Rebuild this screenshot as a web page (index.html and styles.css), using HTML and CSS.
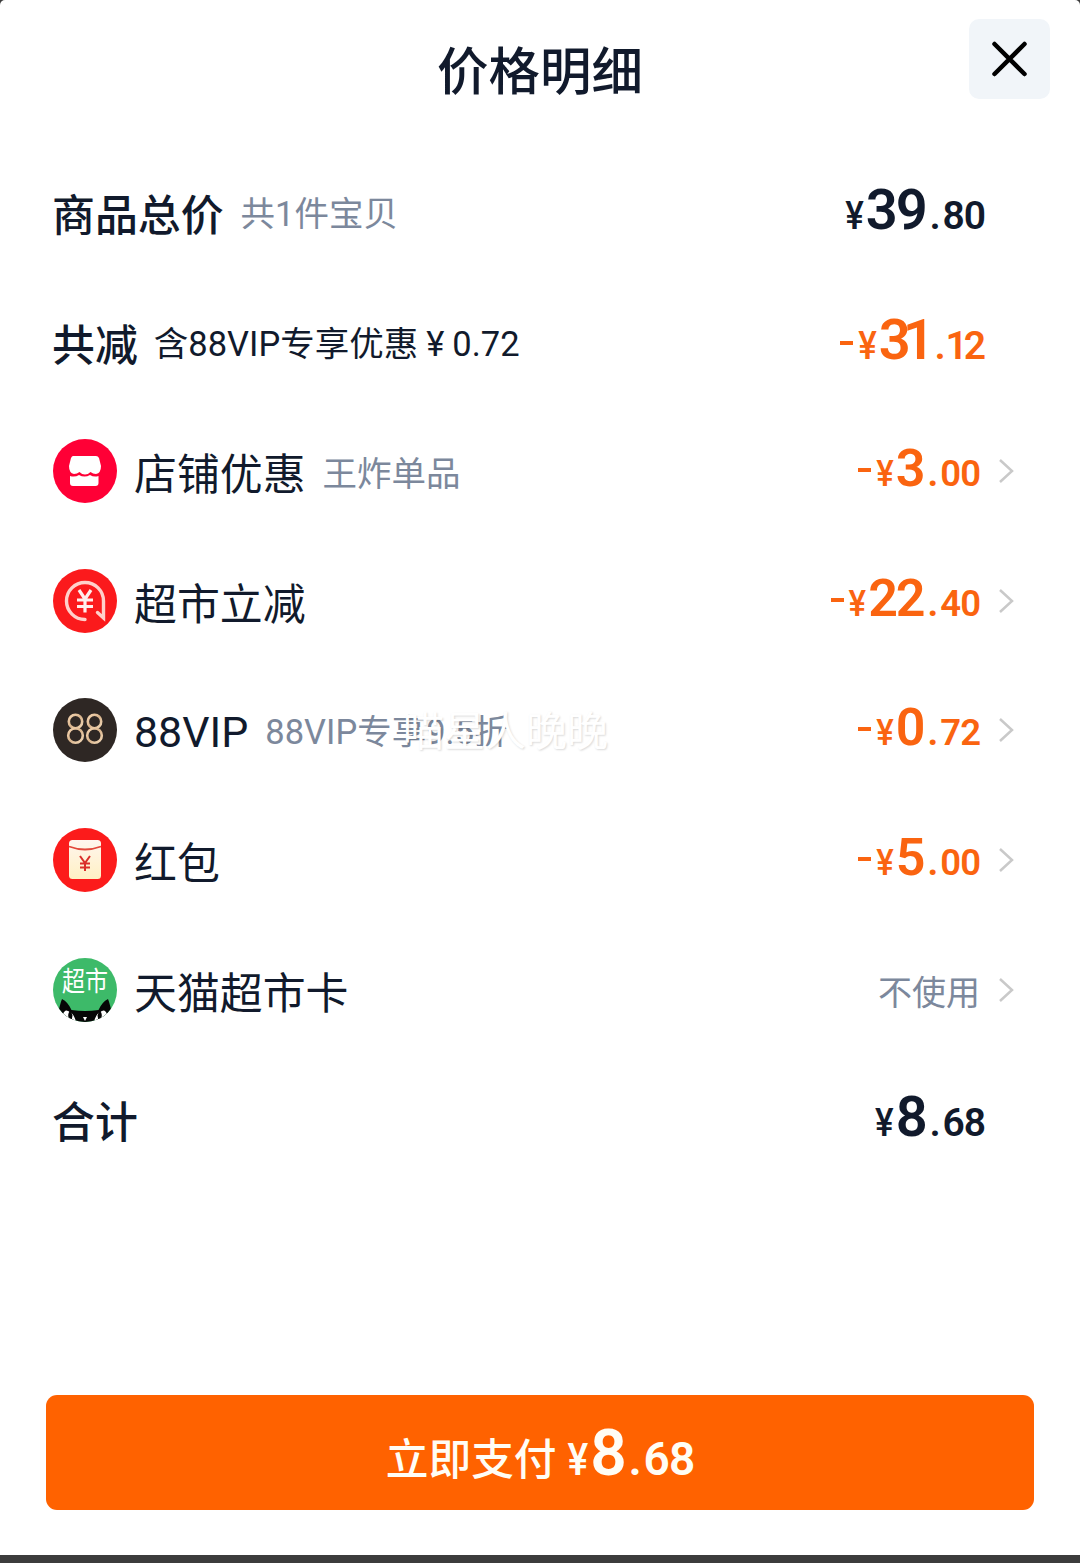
FILE: index.html
```
<!DOCTYPE html>
<html lang="zh-CN">
  <head>
    <meta charset="utf-8" />
    <title>价格明细</title>
    <link rel="stylesheet" href="styles.css">
  </head>
  <body>
    <div class="sheet">
      <header class="header">
        <h1>价格明细</h1>
        <button class="close" aria-label="关闭">
          <svg width="40" height="40" viewBox="0 0 40 40">
            <path d="M4.500 5L34.500 35M34.500 5L4.500 35" />
          </svg>
        </button>
      </header>

      <main class="rows">
        <div class="row summary">
          <span class="label">商品总价</span>
          <span class="note">共1件宝贝</span>
          <span class="price"><i>¥</i><b>39</b><u>.</u><em>80</em></span>
        </div>
        <div class="row summary discount">
          <span class="label">共减</span>
          <span class="note dark">含88VIP专享优惠<span class="yen">¥</span>0.72</span>
          <span class="price tight"><s></s><i>¥</i><b>31</b><u>.</u><em>12</em></span>
        </div>
        <div class="row discount">
          <svg class="icon" viewBox="0 0 64 64">
            <circle cx="32" cy="32" r="32" fill="#ff0036" />
            <path d="M20 17h23q2 0 3 2l2 8q0 7-5 8-3 0-5.500-2-2.500 2.500-5.500 2.500t-5.500-2.500q-2.500 2-5.500 2-5-1-5-8l2-8q1-2 2-2z" fill="#fff" />
            <path d="M17 37q5 1.500 9-1 5.500 3 11 0 4 2.500 8.500 1v7q0 3-3 3h-22.500q-3 0-3-3z" fill="#fff" />
          </svg>
          <span class="label">店铺优惠</span>
          <span class="note">王炸单品</span>
          <span class="price"><s></s><i>¥</i><b>3</b><u>.</u><em>00</em></span>
          <svg class="arrow" viewBox="0 0 18 28"><path d="M3 3L15 14L3 25" /></svg>
        </div>
        <div class="row discount">
          <svg class="icon" viewBox="0 0 64 64">
            <circle cx="32" cy="32" r="32" fill="#fb1a1c" />
            <path d="M32 50.500A18.500 18.500 0 1 1 50.500 32v17l-6-5.500" fill="none" stroke="#ffd0ca" stroke-width="3.400" stroke-linecap="round" />
            <path d="M26 21l6 9 6-9M24 31h16M24 37.500h16M32 30v13.500" fill="none" stroke="#ffefec" stroke-width="3.200" />
          </svg>
          <span class="label">超市立减</span>
          <span class="price"><s></s><i>¥</i><b>22</b><u>.</u><em>40</em></span>
          <svg class="arrow" viewBox="0 0 18 28"><path d="M3 3L15 14L3 25" /></svg>
        </div>
        <div class="row discount">
          <svg class="icon" viewBox="0 0 64 64">
            <defs>
              <linearGradient id="gold" x1="0" y1="0" x2="1" y2="1">
                <stop offset="0" stop-color="#f6d6b2" />
                <stop offset="0.500" stop-color="#d9b48c" />
                <stop offset="1" stop-color="#f3d9b8" />
              </linearGradient>
            </defs>
            <circle cx="32" cy="32" r="32" fill="#2e2724" />
            <g fill="none" stroke="url(#gold)" stroke-width="2.600">
              <circle cx="22.500" cy="23.500" r="6.700" />
              <circle cx="22.500" cy="37.500" r="7.300" />
              <circle cx="41.500" cy="23.500" r="6.700" />
              <circle cx="41.500" cy="37.500" r="7.300" />
            </g>
          </svg>
          <span class="label latin">88VIP</span>
          <span class="note">88VIP专享9.5折</span>
          <span class="watermark">喵星人晚晚</span>
          <span class="price"><s></s><i>¥</i><b>0</b><u>.</u><em>72</em></span>
          <svg class="arrow" viewBox="0 0 18 28"><path d="M3 3L15 14L3 25" /></svg>
        </div>
        <div class="row discount">
          <svg class="icon" viewBox="0 0 64 64">
            <defs>
              <linearGradient id="paper" x1="0" y1="0" x2="0" y2="1">
                <stop offset="0" stop-color="#fff6ee" />
                <stop offset="1" stop-color="#fff0c4" />
              </linearGradient>
            </defs>
            <circle cx="32" cy="32" r="32" fill="#fc1b1b" />
            <rect x="16" y="12" width="32" height="39" rx="3.500" fill="url(#paper)" />
            <path d="M16 18.500Q32 24.500 48 18.500" fill="none" stroke="#e2473b" stroke-width="1.800" />
            <path d="M27 28l5 7 5-7M27 35.500h10M27 39.500h10M32 35v8" fill="none" stroke="#d92f2b" stroke-width="2" />
          </svg>
          <span class="label">红包</span>
          <span class="price"><s></s><i>¥</i><b>5</b><u>.</u><em>00</em></span>
          <svg class="arrow" viewBox="0 0 18 28"><path d="M3 3L15 14L3 25" /></svg>
        </div>
        <div class="row">
          <svg class="icon" viewBox="0 0 64 64">
            <clipPath id="disc"><circle cx="32" cy="32" r="32" /></clipPath>
            <g clip-path="url(#disc)">
              <rect width="64" height="64" fill="#3dba69" />
              <text class="icon-text" x="32" y="27.500" text-anchor="middle" transform="scale(1 1.200)">超市</text>
              <path d="M4 64Q6 48 9 41Q15 44 18.500 52Q32 54 45.500 52Q49 44 55 41Q58 48 60 64z" fill="#060606" />
              <path d="M10 56q2-5 5-3 6 2 8 11h-9zM54 56q-2-5-5-3-6 2-8 11h9z" fill="#fff" />
              <path d="M17 53q3.500 4 1 10q-4-5-1-10zM47 53q-3.500 4-1 10q4-5 1-10z" fill="#060606" stroke="#060606" />
              <path d="M30 59h4l-2 4z" fill="#fff" />
            </g>
          </svg>
          <span class="label">天猫超市卡</span>
          <span class="note unused">不使用</span>
          <svg class="arrow" viewBox="0 0 18 28"><path d="M3 3L15 14L3 25" /></svg>
        </div>
        <div class="row summary">
          <span class="label">合计</span>
          <span class="price"><i>¥</i><b>8</b><u>.</u><em>68</em></span>
        </div>
      </main>

      <button class="pay">
        <span class="pay-text">立即支付</span>
        <span class="price"><i>¥</i><b>8</b><u>.</u><em>68</em></span>
      </button>
    </div>
  </body>
</html>
```

FILE: styles.css
```
* {
  box-sizing: border-box;
}
body {
  margin: 0;
  background-color: #3c3c3c;
  font-family: Roboto, 'Noto Sans CJK SC', sans-serif;
  color: #111a2c;
}
.sheet {
  display: flex;
  flex-direction: column;
  height: 1555px;
  background-color: #fff;
  border-radius: 5px 5px 0 0;
}
.header {
  display: grid;
  grid-template-columns: 81px 1fr 81px;
  padding: 19px 30px 0;
  height: 148px;
}
h1 {
  grid-column: 2;
  margin: 16px 0 0;
  font-size: 51.500px;
  font-weight: 500;
  line-height: 76px;
  text-align: center;
}
.close {
  display: flex;
  align-items: center;
  justify-content: center;
  width: 81px;
  height: 80px;
  padding: 0;
  border: 0;
  border-radius: 10px;
  background-color: #f1f5f9;
}
.close path {
  stroke: #000;
  stroke-width: 4.5;
  stroke-linecap: round;
}
.rows {
  padding: 0 65px 0 53px;
}
.row {
  position: relative;
  display: flex;
  align-items: flex-start;
  height: 129.6px;
  padding-top: 32px;
}
.summary {
  padding-right: 30px;
}
.icon {
  flex: none;
  width: 64px;
  height: 64px;
  margin-right: 17px;
}
.label {
  margin-top: 3px;
  font-size: 42.900px;
  line-height: 66px;
}
.label.latin {
  margin-top: 1px;
}
.summary .label {
  margin-left: -1px;
  font-weight: 500;
}
.note {
  margin: 5px 0 0 17px;
  font-size: 34.500px;
  line-height: 60px;
  color: #7c889c;
}
.latin + .note {
  margin-top: 4px;
}
.summary .note {
  margin-top: 4px;
}
.note.dark {
  margin-left: 16px;
  color: #111a2c;
}
.note.unused {
  margin-left: auto;
  font-size: 34px;
}
.yen {
  margin: 0 8px;
}
.price {
  display: flex;
  align-items: baseline;
  margin-left: auto;
  font-weight: 500;
  line-height: 60px;
}
.price i {
  margin-right: 2px;
  font-size: 33px;
  font-style: normal;
  /* tall, narrow yen sign */
  transform: scaleY(1.12);
  transform-origin: 50% 70%;
}
.price b {
  font-size: 52px;
  font-weight: 600;
  letter-spacing: -2px;
}
.price u {
  margin: 0 2px 0 4px;
  font-size: 37px;
  font-weight: 700;
  text-decoration: none;
}
.price em {
  font-size: 36.500px;
  font-style: normal;
  font-weight: 600;
  letter-spacing: -1px;
}
.price s {
  width: 13px;
  height: 4px;
  margin-right: 5px;
  transform: translateY(-14px);
  background-color: currentColor;
}
.summary .price i {
  font-size: 35px;
}
.summary .price b {
  font-size: 56px;
}
.summary .price em {
  font-size: 39px;
}
/* pairs with a 1 sit closer together */
.summary .tight b {
  margin-right: 4px;
  letter-spacing: -8px;
}
.summary .tight em {
  margin: 0 3px 0 -2px;
  letter-spacing: -4px;
}
.discount .price {
  color: #fa6410;
}
.arrow {
  width: 18px;
  height: 28px;
  margin: 18px 0 0 17px;
  fill: none;
  stroke: #c9c9c9;
  stroke-width: 2.5;
}
.icon-text {
  font: 23px 'Noto Sans CJK SC', sans-serif;
  fill: #fff;
}
.watermark {
  position: absolute;
  left: 350px;
  top: 36px;
  font-size: 41px;
  line-height: 60px;
  color: #fff;
  text-shadow: 1px 1px 2px rgba(0, 0, 0, 0.15);
}
.pay {
  display: flex;
  align-items: baseline;
  justify-content: center;
  height: 115px;
  margin: auto 46px 45px;
  padding: 29px 0 0;
  border: 0;
  border-radius: 11px;
  background-color: #ff6200;
  font-family: inherit;
  color: #fffdf5;
}
.pay-text {
  font-size: 42.700px;
  font-weight: 500;
  line-height: 64px;
}
.pay .price {
  margin-left: 11px;
}
.pay .price i {
  font-size: 39px;
}
.pay .price b {
  font-size: 64px;
}
.pay .price u {
  font-size: 44px;
}
.pay .price em {
  font-size: 46px;
}
```
